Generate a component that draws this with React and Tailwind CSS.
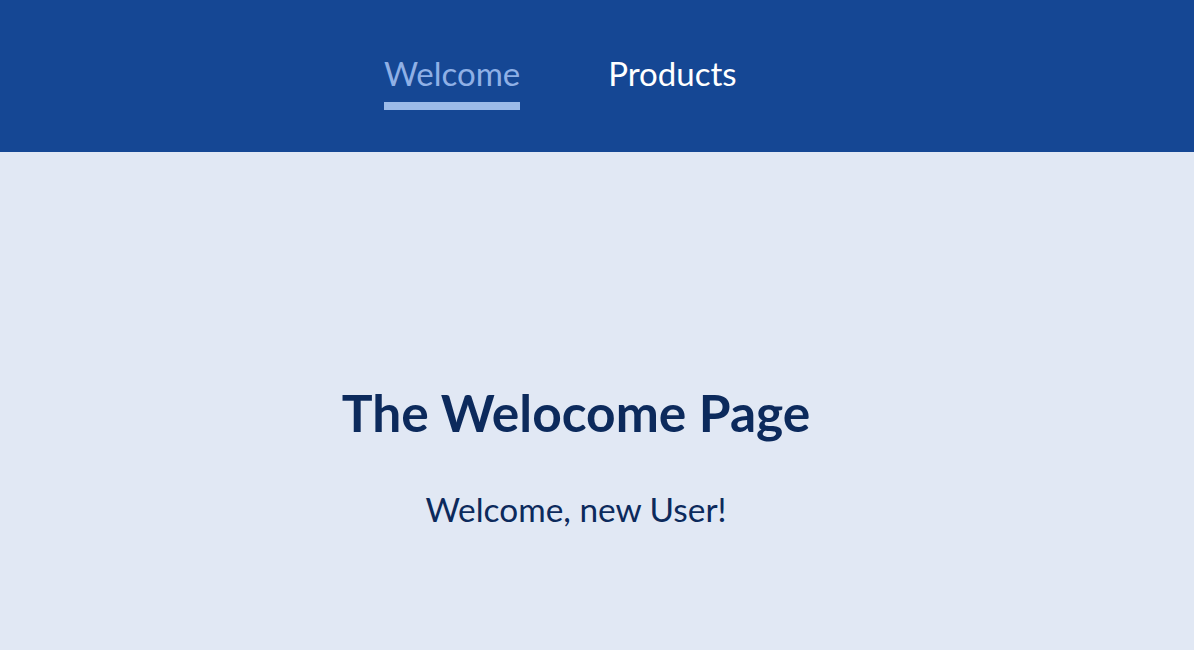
export default function App() {
  return (
    <div className="min-h-[650px] w-full bg-[#e1e8f4]" style={{ fontFamily: "Lato, 'Open Sans', sans-serif" }}>
      <header className="h-[152px] bg-[#154794] flex items-start pl-[384px] pt-[51px] gap-[88px]">
        <div className="flex flex-col items-stretch">
          <span className="text-[33px] leading-[44px] text-[#8fb0e6]">Welcome</span>
          <div className="mt-[7px] h-[8px] bg-[#9bbbe9]" />
        </div>
        <span className="text-[33px] leading-[44px] text-white">Products</span>
      </header>
      <main className="w-[1152px] flex flex-col items-center pt-[228px] text-[#0c2a5c]">
        <h1 className="text-[51.5px] leading-[64px] font-bold">The Welocome Page</h1>
        <p className="mt-[45px] text-[33.4px] leading-[40px]">Welcome, new User!</p>
      </main>
    </div>
  );
}
